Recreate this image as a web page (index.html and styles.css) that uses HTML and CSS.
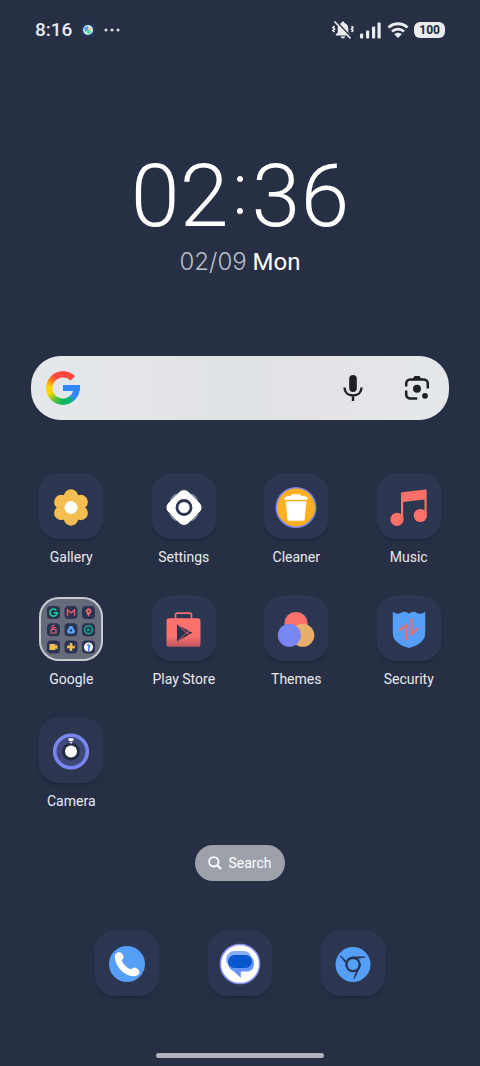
FILE: index.html
```html
<!DOCTYPE html>
<html lang="en">
<head>
<meta charset="utf-8">
<meta name="viewport" content="width=device-width, initial-scale=1">
<title>Home</title>
<link rel="stylesheet" href="styles.css">
</head>
<body>
<header class="status">
  <div class="status-left">
    <span class="status-time">8:16</span>
    <svg class="status-app" viewBox="0 0 14 14" aria-hidden="true"><rect width="14" height="14" rx="4" fill="#26365a"/><circle cx="7" cy="7" r="5" fill="#d5f0fa"/><path d="M3 4.500L7 3l1 4-4 2z" fill="#57a5f5"/><circle cx="8" cy="9" r="2.200" fill="#69dca3"/><circle cx="9" cy="6" r="1.600" fill="#f2cf7c"/></svg>
    <svg class="status-more" viewBox="0 0 16 4" aria-hidden="true"><g fill="#dfe1e6"><circle cx="2" cy="2" r="1.500"/><circle cx="8" cy="2" r="1.500"/><circle cx="14" cy="2" r="1.500"/></g></svg>
  </div>
  <div class="status-right">
    <svg width="24" height="20" viewBox="0 0 24 20" aria-hidden="true"><path d="M12 1.500c.9 0 1.400.6 1.400 1.400 2.400.7 3.900 2.700 3.900 5.200v4.400l1.900 2v1H4.800v-1l1.900-2V8.100c0-2.500 1.500-4.500 3.900-5.200 0-.8.5-1.400 1.400-1.400zM9.800 16.500h4.400c-.2 1.300-1 2-2.200 2s-2-.7-2.200-2z" fill="#e9ebef"/><path d="M3.500 6L2 7.500 3.500 9 2 10.500 3.500 12M20.500 6L22 7.500 20.500 9l1.500 1.500-1.500 1.500" fill="none" stroke="#e9ebef" stroke-width="1.700"/><path d="M5 1l16 17" stroke="#272f45" stroke-width="1.600"/><path d="M3.500 1.500l16 17" stroke="#e9ebef" stroke-width="1.700"/></svg>
    <svg width="22" height="18" viewBox="0 0 22 18" aria-hidden="true"><g fill="#e9ebef"><rect x="0" y="12.500" width="3.200" height="5" rx="1"/><rect x="6" y="9.500" width="3.200" height="8" rx="1"/><rect x="12" y="5.500" width="3.200" height="12" rx="1"/><rect x="17.500" y="1.500" width="3.200" height="16" rx="1"/></g></svg>
    <svg width="22" height="18" viewBox="0 0 22 18" aria-hidden="true"><g fill="none" stroke="#e9ebef" stroke-width="2.800"><path d="M1.500 6.500c5.500-5 13.500-5 19 0"/><path d="M5 10.500c3.500-3.200 8.500-3.200 12 0"/></g><path d="M11 17l-3.800-3.800c2.300-2 5.300-2 7.600 0z" fill="#e9ebef"/></svg>
    <span class="battery">100</span>
  </div>
</header>

<main class="home">
  <section class="clock">
    <time class="clock-time"><span>02</span><span class="clock-colon">:</span><span>36</span></time>
    <p class="clock-date"><span class="clock-day">02/09</span> Mon</p>
  </section>

  <form class="search-bar" role="search">
    <span class="g-logo"><span class="g-ring"></span></span>
    <input class="search-input" type="text" aria-label="Search the web">
    <button class="search-action" type="button" aria-label="Voice search">
      <svg width="20" height="28" viewBox="0 0 20 28"><rect x="6.200" y="1" width="7.600" height="17" rx="3.800" fill="#1f2023"/><path d="M1.500 13.500c0 5 3.700 8 8.500 8s8.500-3 8.500-8M10 21.500V27" fill="none" stroke="#1f2023" stroke-width="2.400"/></svg>
    </button>
    <button class="search-action" type="button" aria-label="Image search">
      <svg width="26" height="26" viewBox="0 0 26 26"><g fill="none" stroke="#1f2023" stroke-width="2.500"><path d="M2.200 11.500V8.500a4 4 0 0 1 4-4h13.600a4 4 0 0 1 4 4v5"/><path d="M2.200 15.500v4a4 4 0 0 0 4 4h7"/></g><path d="M8.500 4.500L10.500 1h5l2 3.500z" fill="#1f2023"/><circle cx="13" cy="13.800" r="4" fill="#1f2023"/><circle cx="21" cy="20.800" r="2.900" fill="#1f2023"/></svg>
    </button>
  </form>

  <nav class="apps" aria-label="Apps">
    <a class="app" href="#gallery"><span class="tile"><svg viewBox="0 0 64 64"><g fill="#f5be53"><circle cx="32" cy="32.500" r="12"/><circle cx="32" cy="21.500" r="7.200"/><circle cx="32" cy="43.500" r="7.200"/><circle cx="22.300" cy="27" r="7.200"/><circle cx="41.700" cy="27" r="7.200"/><circle cx="22.300" cy="38" r="7.200"/><circle cx="41.700" cy="38" r="7.200"/></g><circle cx="32" cy="32.500" r="6.500" fill="#fff"/></svg></span>Gallery</a>
    <a class="app" href="#settings"><span class="tile"><svg viewBox="0 0 64 64"><rect x="18" y="18.500" width="28" height="28" rx="8.500" fill="#8489a0"/><rect x="17.800" y="18.300" width="28.400" height="28.400" rx="6" fill="#fff" transform="rotate(45 32 32.500)"/><circle cx="32" cy="32.500" r="7" fill="#fff" stroke="#2c3652" stroke-width="2.800"/></svg></span>Settings</a>
    <a class="app" href="#cleaner"><span class="tile"><svg viewBox="0 0 64 64"><circle cx="32" cy="32.500" r="19.700" fill="#ffb01f" stroke="#7d84e8" stroke-width="1.600"/><path d="M20.500 24.800v-2q0-1.300 1.500-1.400l4.500-.4 1.500-1.800h8l1.500 1.800 4.500.4q1.500.1 1.500 1.400v2zM21.700 26.200h20.800l-1.900 18.300q-.2 1.300-1.500 1.300H25q-1.300 0-1.500-1.300z" fill="#fff"/></svg></span>Cleaner</a>
    <a class="app" href="#music"><span class="tile"><svg viewBox="0 0 64 64"><g fill="#fb7069"><path d="M24 18.600q0-1.300 1.300-1.400l22.800-2.700q1.600-.2 1.600 1.300V40.500h-2.200V24.600L26.200 27v17H24z"/><circle cx="20" cy="44.400" r="6.600"/><circle cx="43.300" cy="40.500" r="6.600"/></g></svg></span>Music</a>

    <a class="app" href="#google"><span class="tile tile-folder"><svg viewBox="0 0 64 64">
      <g fill="#2a3350"><rect x="8" y="9" width="13" height="13" rx="4"/><rect x="25.500" y="9" width="13" height="13" rx="4"/><rect x="43" y="9" width="13" height="13" rx="4"/><rect x="8" y="26.300" width="13" height="13" rx="4"/><rect x="25.500" y="26.300" width="13" height="13" rx="4"/><rect x="43" y="26.300" width="13" height="13" rx="4"/><rect x="8" y="43.500" width="13" height="13" rx="4"/><rect x="25.500" y="43.500" width="13" height="13" rx="4"/><rect x="43" y="43.500" width="13" height="13" rx="4"/></g>
      <path d="M17.200 13.200a3.600 3.600 0 1 0 .9 2.600h-3.400" fill="none" stroke="#12d39b" stroke-width="1.600"/>
      <path d="M28.500 19v-6l3.500 3 3.500-3v6" fill="none" stroke="#e8616a" stroke-width="1.300"/>
      <path d="M49.500 19.800l-1.800-3.600a2.700 2.700 0 1 1 3.600 0z" fill="#f0666c"/><circle cx="49.500" cy="14.200" r="1" fill="#2a3350"/>
      <path d="M12 32.500v3.500h5v-3.500zM13 32v-3l2.500-1M14.500 32v-1.500h2.500" fill="none" stroke="#e8616a" stroke-width="1.100"/>
      <path d="M30.800 29h2.400l3 5.200-1.200 2.200h-6l-1.200-2.200z" fill="#58a2fb"/><circle cx="32" cy="33.400" r="1.200" fill="#2a3350"/>
      <circle cx="49.500" cy="32.800" r="3.900" fill="none" stroke="#12bd90" stroke-width="1.300"/><path d="M48.400 31l2.800 1.800-2.800 1.800z" fill="#12bd90"/>
      <path d="M10.500 47h6v2l2-1.500v5l-2-1.500v2h-6z" fill="#f5be53"/>
      <path d="M30.500 45.800l3 .8v2.600l2.800-.6-.8 3-2.600-.1.600 2.700-3-.8V51l-2.800.5.800-3h2.500z" fill="#f5be53"/>
      <circle cx="49.500" cy="50" r="4.600" fill="#fff"/><path d="M47.500 47.800l2-1.300v3z" fill="#e2584e"/><path d="M49 47.500h1.500V54H49z" fill="#3780f4"/><path d="M50.500 46.500q1.800 1 .8 3.500l-.8 1z" fill="#40b46c"/></svg></span>Google</a>
    <a class="app" href="#play"><span class="tile"><svg viewBox="0 0 64 64"><defs><linearGradient id="bag" x1="0" y1="0" x2="0" y2="1"><stop offset=".62" stop-color="#fb716c"/><stop offset="1" stop-color="#bd5660"/></linearGradient></defs><path d="M23.500 22v-4q0-1.800 1.800-1.800h12.400q1.800 0 1.800 1.800v4" fill="none" stroke="#f46f6b" stroke-width="1.700"/><rect x="14.500" y="21.300" width="34" height="28.500" rx="2.600" fill="url(#bag)"/><path d="M25 27.500v17l15.500-8.700z" fill="#293550"/><path d="M26.500 28.500l8 7.200-8 8M34.500 35.700l3.300-1.800M34.500 35.700l3 1.700" fill="none" stroke="#d9646a" stroke-width="1"/></svg></span>Play Store</a>
    <a class="app" href="#themes"><span class="tile"><svg viewBox="0 0 64 64"><circle cx="32" cy="26.500" r="11.500" fill="#fb716c"/><circle cx="38.800" cy="38.300" r="11.500" fill="#e8ae6b"/><circle cx="25.300" cy="38.300" r="11.500" fill="#7985f2"/></svg></span>Themes</a>
    <a class="app" href="#security"><span class="tile"><svg viewBox="0 0 64 64"><path d="M15.800 14.700q4.200 3.300 8.500 1 4-2 7.700.8 3.700-2.800 7.700-.8 4.300 2.300 8.500-1V36q0 10.500-16.200 15Q15.800 46.500 15.800 36z" fill="#559ff8"/><path d="M22.500 33.500l6.500-5.500v15.500M34.500 21.500v15.800l6.500-6" fill="none" stroke="#e9706f" stroke-width="2.200"/></svg></span>Security</a>

    <a class="app" href="#camera"><span class="tile"><svg viewBox="0 0 64 64"><circle cx="32" cy="32.500" r="16.300" fill="#3e497a" stroke="#7a85f0" stroke-width="3.600"/><circle cx="32" cy="32.500" r="9" fill="#252d43"/><circle cx="32" cy="32.500" r="6" fill="#fff"/><rect x="29.300" y="19.300" width="5.400" height="2.600" rx="1.300" fill="#fff"/><rect x="30.500" y="22.800" width="3" height="1.600" rx=".8" fill="#d5d9ea"/></svg></span>Camera</a>
  </nav>

  <button class="search-pill" type="button"><svg width="14" height="14" viewBox="0 0 14 14" aria-hidden="true"><circle cx="5.800" cy="5.800" r="4.700" fill="none" stroke="#fff" stroke-width="1.800"/><path d="M9.200 9.200L13 13" stroke="#fff" stroke-width="2"/></svg>Search</button>

  <nav class="dock" aria-label="Dock">
    <a class="tile" href="#phone" aria-label="Phone"><svg viewBox="0 0 64 64"><circle cx="32" cy="32" r="18" fill="#559ff8"/><path d="M24.700 20.300c-2.400-.2-5.200 1.700-5 4.400C20.300 34.500 29 43.700 38.300 44.300c3 .2 6.300-1.800 6.200-4.300-.2-1.700-2.600-3.700-4.500-4.400-1.800-.6-2.900 1.400-4.300 1.700-3.400-.9-8-5.600-8.900-8.700.1-1.300 2.100-2.100 1.800-3.900-.4-1.800-2.200-4.300-3.900-4.400z" fill="#fff"/></svg></a>
    <a class="tile" href="#messages" aria-label="Messages"><svg viewBox="0 0 64 64"><circle cx="32" cy="32" r="19.600" fill="#fff" stroke="#8a8df0" stroke-width="1.500"/><rect x="18" y="19" width="26" height="17" rx="8.500" fill="#86adfb"/><path d="M28 23h10a8 8 0 0 1 8 8v.5a8 8 0 0 1-5.500 8H32.800V46l-7-6.800Q20 37 20 31a8 8 0 0 1 8-8z" fill="#6694f8"/><rect x="20" y="23" width="24" height="13" rx="6.500" fill="#0957cf"/></svg></a>
    <a class="tile" href="#browser" aria-label="Chrome"><svg viewBox="0 0 64 64"><circle cx="32" cy="32.500" r="17.500" fill="#559ff8"/><circle cx="32" cy="32.500" r="6.600" fill="none" stroke="#263450" stroke-width="2.200"/><path d="M25.500 27.500Q28 24.600 32 24.600h12.500v1L35 26.900l-3-.8-4 1.500zM26.500 37.500Q24 34.500 24.500 31l-5.700-7 .8-.7 6.700 6.700-.3 3.500zM39.500 30q1.200 4-1.500 7.500L33.500 47l-1-.3 2.700-8.200 3-3z" fill="#263450"/></svg></a>
  </nav>
</main>
<div class="home-indicator"></div>
</body>
</html>
```
FILE: styles.css
```css
* { box-sizing: border-box; }

body {
  margin: 0;
  min-height: 100vh;
  display: flex;
  flex-direction: column;
  background: #272f45;
  color: #e8eaef;
  font-family: Roboto, "Noto Sans", sans-serif;
  font-size: 14px;
}

a { color: inherit; text-decoration: none; }

button {
  border: 0;
  padding: 0;
  background: none;
  color: inherit;
  font: inherit;
  cursor: pointer;
}

svg { display: block; }

.status {
  height: 60px;
  padding: 0 35px;
  display: flex;
  align-items: center;
  justify-content: space-between;
}

.status-left { display: flex; align-items: center; gap: 9px; }
.status-time { font-size: 19px; line-height: 24px; font-weight: 500; }
.status-app { width: 14px; height: 14px; }
.status-more { width: 16px; height: 4px; }
.status-right { display: flex; align-items: center; gap: 5px; }

.battery {
  padding: 0 5px;
  border-radius: 6px;
  background: #e9ebef;
  color: #272f45;
  font-size: 12px;
  line-height: 16px;
  font-weight: 800;
}

.home {
  flex: 1;
  display: flex;
  flex-direction: column;
}

.clock {
  padding-top: 90px;
  color: #fff;
  text-align: center;
}

.clock-time {
  display: flex;
  justify-content: center;
  gap: 4px;
  font-size: 88px;
  line-height: 92px;
  font-weight: 300;
}

.clock-colon { font-size: 72px; line-height: 80px; }

.clock-date {
  margin: 6px 0 0;
  font-size: 24px;
  line-height: 28px;
  font-weight: 450;
}

.clock-day {
  color: #b9bdc8;
  font-family: Inter, Roboto, sans-serif;
  font-weight: 300;
}

.search-bar {
  height: 64px;
  margin: 80px 31px 0;
  padding: 0 19px 0 15px;
  display: flex;
  align-items: center;
  border-radius: 30px;
  background: linear-gradient(90deg, #e4e8eb, #e4e5e8 28%, #dfe2e5 50%, #e4e4e8 68%, #e4e7ea);
}

.g-logo {
  position: relative;
  flex: none;
  width: 34px;
  height: 34px;
}

.g-ring {
  display: block;
  height: 100%;
  border-radius: 50%;
  background: conic-gradient(#ff4641 0 50deg, #3186ff 80deg 125deg, #10b860 160deg 185deg, #4dc23a 210deg, #ffd500 250deg 275deg, #ff8a15 300deg, #ff4641 325deg);
  -webkit-mask: radial-gradient(circle, transparent 10px, #000 11px);
  mask: radial-gradient(circle, transparent 10px, #000 11px);
  clip-path: polygon(50% 50%, 87% 13%, 70% 0, 0 0, 0 100%, 100% 100%, 100% 41%, 50% 41%);
}

.g-logo::after {
  content: "";
  position: absolute;
  top: 14px;
  left: 17px;
  width: 17px;
  height: 6px;
  border-radius: 0 0 2px 0;
  background: #3186ff;
}

.search-input {
  flex: 1;
  min-width: 0;
  height: 40px;
  margin: 0 16px;
  border: 0;
  outline: 0;
  background: none;
  color: #1f2023;
  font: inherit;
}

.search-action {
  width: 26px;
  display: flex;
  justify-content: center;
}

.search-action + .search-action { margin-left: 38px; }

.apps {
  margin-top: 55px;
  padding: 0 15px;
  display: grid;
  grid-template-columns: repeat(4, 1fr);
  row-gap: 30px;
}

.app {
  display: flex;
  flex-direction: column;
  align-items: center;
  gap: 8px;
  line-height: 20px;
}

.tile {
  width: 64px;
  height: 64px;
  border-radius: 20px;
  background: #2c3651;
  box-shadow: 0 -1px 2px #343e59, 0 2px 3px #20283c;
}

.tile-folder {
  background: #656b7b;
  box-shadow: inset 0 0 0 2px #c6c9cf;
}

.search-pill {
  align-self: center;
  margin-top: 34px;
  height: 36px;
  padding: 0 13px;
  display: flex;
  align-items: center;
  gap: 6px;
  border-radius: 18px;
  background: #9da1a9;
  color: #fff;
}

.dock {
  margin-top: 51px;
  padding: 0 71px;
  display: grid;
  grid-template-columns: repeat(3, 1fr);
  justify-items: center;
}

.home-indicator {
  align-self: center;
  width: 35%;
  height: 5px;
  margin-bottom: 8px;
  border-radius: 3px;
  background: #b1b4bc;
}
```
